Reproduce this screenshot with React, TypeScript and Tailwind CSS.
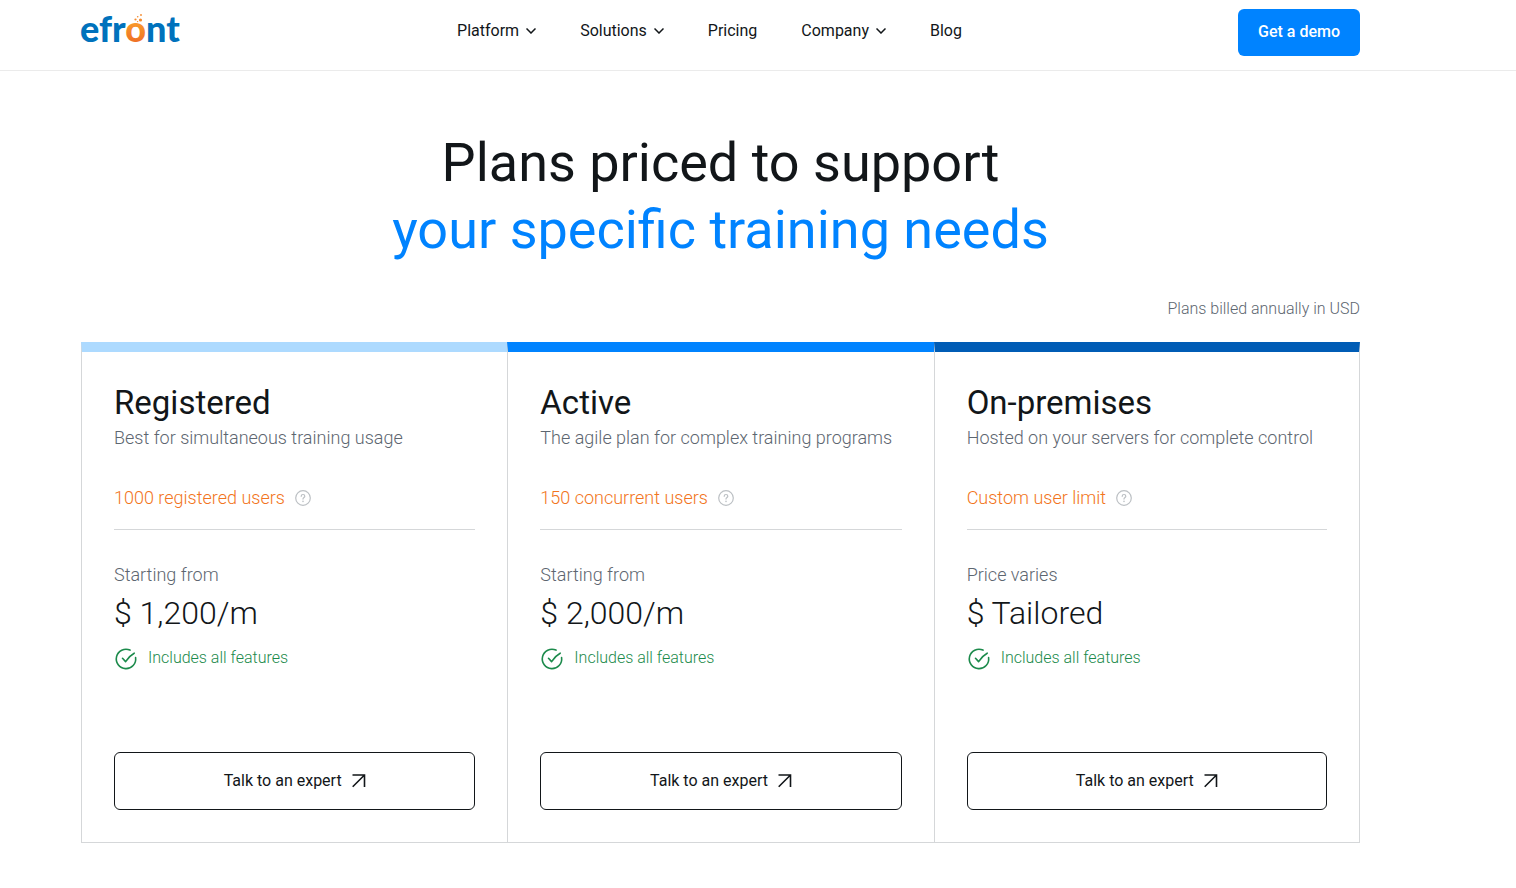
import clsx from "clsx";

type Plan = {
  name: string;
  summary: string;
  users: string;
  priceLabel: string;
  price: string;
  accent: string;
};

const plans: Plan[] = [
  {
    name: "Registered",
    summary: "Best for simultaneous training usage",
    users: "1000 registered users",
    priceLabel: "Starting from",
    price: "$ 1,200/m",
    accent: "border-t-[#addaff]",
  },
  {
    name: "Active",
    summary: "The agile plan for complex training programs",
    users: "150 concurrent users",
    priceLabel: "Starting from",
    price: "$ 2,000/m",
    accent: "border-t-[#0083ff]",
  },
  {
    name: "On-premises",
    summary: "Hosted on your servers for complete control",
    users: "Custom user limit",
    priceLabel: "Price varies",
    price: "$ Tailored",
    accent: "border-t-[#005cb5]",
  },
];

const navItems = [
  { label: "Platform", menu: true },
  { label: "Solutions", menu: true },
  { label: "Pricing", menu: false },
  { label: "Company", menu: true },
  { label: "Blog", menu: false },
];

function Logo() {
  return (
    <svg width="100" height="48" viewBox="0 0 100 48" overflow="visible" role="img" aria-label="efront">
      <defs>
        <linearGradient id="flask" x1="0" y1="0" x2="0" y2="1">
          <stop offset="0.3" stopColor="#fba12b" />
          <stop offset="1" stopColor="#ea5f24" />
        </linearGradient>
      </defs>
      <text x="-1" y="34" fontSize="36" className="font-[Lato,sans-serif] font-black" fill="#0072bc">
        efr<tspan fill="url(#flask)">o</tspan>nt
      </text>
      <g fill="#f58a2c">
        <circle cx="60" cy="7" r="0.9" />
        <circle cx="56.7" cy="8.7" r="0.8" />
        <circle cx="54.5" cy="11.5" r="1.1" />
        <circle cx="59.5" cy="12" r="1.6" />
        <circle cx="56.6" cy="13.6" r="0.7" />
      </g>
    </svg>
  );
}

function Chevron() {
  return (
    <svg width="10" height="6" viewBox="0 0 10 6" fill="none" stroke="#121619" strokeWidth="1.5">
      <path d="M0.5 0.5L5 5L9.5 0.5" />
    </svg>
  );
}

function HelpIcon() {
  return (
    <svg width="16" height="16" viewBox="0 0 16 16" fill="none" stroke="#bcc0c4" strokeWidth="1.2" strokeLinecap="round">
      <circle cx="8" cy="8" r="7.3" />
      <path d="M6.2 6.3C6.2 5.2 7 4.5 8 4.5S9.8 5.2 9.8 6.2C9.8 7.5 8 7.5 8 9.1" />
      <path d="M8 11.2v.2" strokeWidth="1.5" />
    </svg>
  );
}

function CheckIcon() {
  return (
    <svg width="24" height="24" viewBox="0 0 24 24" fill="none" stroke="#1b8a4b" strokeWidth="1.6" strokeLinecap="round" strokeLinejoin="round">
      <path d="M16 4.1A9.7 9.7 0 1 0 21.6 11.6" />
      <path d="M8.5 12.3L11.6 15.6Q14.8 10.2 20.2 7.2" />
    </svg>
  );
}

function ArrowIcon() {
  return (
    <svg width="14" height="14" viewBox="0 0 14 14" fill="none" stroke="#121619" strokeWidth="1.6">
      <path d="M0.5 1H12.5V13M12.5 1L0.7 12.8" />
    </svg>
  );
}

function PlanCard({ plan, last }: { plan: Plan; last: boolean }) {
  return (
    <article
      className={clsx(
        "flex flex-col border-t-10 border-b border-l border-x-[#d5d7d9] border-b-[#d5d7d9] px-8 pt-[31px] pb-8",
        plan.accent,
        last && "border-r"
      )}
    >
      <h2 className="text-[33px] leading-10 text-[#121619]">{plan.name}</h2>
      <p className="text-lg leading-[30px] font-light text-[#5d6670]">{plan.summary}</p>

      <div className="mt-[30px] flex items-center gap-2.5 border-b border-[#d5d7d9] pb-4">
        <span className="text-lg leading-[30px] font-light text-[#f27420]">{plan.users}</span>
        <button type="button" aria-label={`About ${plan.users}`}>
          <HelpIcon />
        </button>
      </div>

      <p className="mt-[30px] text-lg leading-[30px] font-light text-[#5d6670]">{plan.priceLabel}</p>
      <p className="text-[32px] leading-[46px] font-light text-[#121619]">{plan.price}</p>
      <div className="mt-2.5 flex items-center gap-2.5 leading-6 font-light text-[#1b8a4b]">
        <CheckIcon />
        Includes all features
      </div>

      <button
        type="button"
        className="mt-[82px] flex h-[58px] items-center justify-center gap-2.5 rounded-md border border-[#121619] text-[#121619]"
      >
        Talk to an expert
        <ArrowIcon />
      </button>
    </article>
  );
}

export default function App() {
  return (
    <div className="bg-white font-[Roboto,sans-serif] text-base text-[#121619]">
      <header className="flex items-center justify-between border-b border-[#ebebeb] pt-2 pr-39 pb-3.5 pl-[81px]">
        <a href="#">
          <Logo />
        </a>
        <nav className="flex items-center gap-11 pb-0.5">
          {navItems.map((item) =>
            item.menu ? (
              <button key={item.label} type="button" className="flex items-center gap-[7px]">
                {item.label}
                <Chevron />
              </button>
            ) : (
              <a key={item.label} href="#">
                {item.label}
              </a>
            )
          )}
        </nav>
        <button type="button" className="h-[47px] rounded-md bg-[#0083ff] px-5 font-medium text-white">
          Get a demo
        </button>
      </header>

      <main className="pt-[58px] pr-39 pb-11 pl-[81px]">
        <h1 className="text-center text-[54px] leading-[67px]">
          Plans priced to support
          <span className="block text-[#0083ff]">your specific training needs</span>
        </h1>
        <p className="mt-[34px] text-right leading-6 font-light text-[#5d6670]">Plans billed annually in USD</p>
        <section className="mt-[21px] grid grid-cols-3">
          {plans.map((plan, i) => (
            <PlanCard key={plan.name} plan={plan} last={i === plans.length - 1} />
          ))}
        </section>
      </main>
    </div>
  );
}
